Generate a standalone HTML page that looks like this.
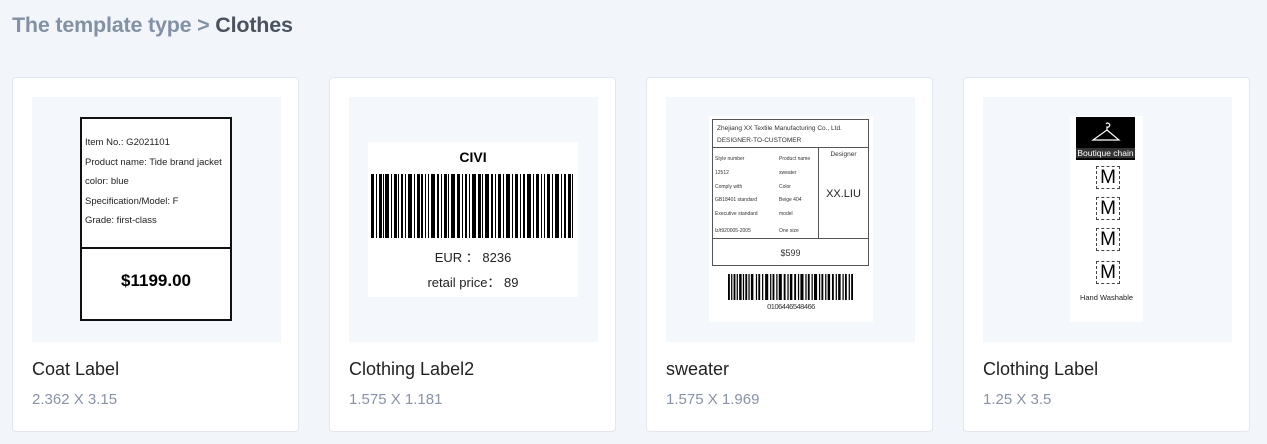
<!DOCTYPE html>
<html><head><meta charset="utf-8"><style>
*{margin:0;padding:0;box-sizing:border-box}
body{width:1267px;height:444px;background:#f2f5f9;font-family:"Liberation Sans",sans-serif;position:relative;overflow:hidden}
.a{position:absolute}
.crumb{left:12px;top:13px;font-size:21.5px;font-weight:bold;color:#8391a5;letter-spacing:-0.2px}
.crumb b{color:#4a5260}
.card{top:77px;width:287px;height:355px;background:#fff;border:1px solid #e3e8ef;border-radius:4px}
.img{left:19px;top:19px;width:249px;height:245px;background:#f4f7fc}
.t{left:19px;top:281px;font-size:18px;color:#222}
.s{left:19px;top:313px;font-size:15px;color:#8993a6}
.sm{font-size:9.5px;color:#222;line-height:19.5px}
.tiny{font-size:5px;color:#333}
</style></head><body>
<div class="a crumb">The template type &gt; <b>Clothes</b></div>

<div class="a card" style="left:12px">
 <div class="a img">
  <div class="a" style="left:48px;top:20px;width:152px;height:204px;background:#fff;border:2px solid #111">
   <div class="a sm" style="left:3px;top:14px;white-space:nowrap">Item No.: G2021101<br>Product name: Tide brand jacket<br>color: blue<br>Specification/Model: F<br>Grade: first-class</div>
   <div class="a" style="left:0;top:128px;width:148px;height:2px;background:#111"></div>
   <div class="a" style="left:0;top:152px;width:148px;text-align:center;font-size:17px;font-weight:bold">$1199.00</div>
  </div>
 </div>
 <div class="a t">Coat Label</div><div class="a s">2.362 X 3.15</div>
</div>

<div class="a card" style="left:329px">
 <div class="a img">
  <div class="a" style="left:19px;top:45px;width:210px;height:155px;background:#fff">
   <div class="a" style="left:0;top:7px;width:210px;text-align:center;font-size:14px;font-weight:bold">CIVI</div>
   <svg class="a" style="left:3px;top:32px" width="202" height="64" viewBox="0 0 202 64" preserveAspectRatio="none"><g fill="#000">
   <rect x="0" width="3" height="64"/><rect x="5" width="1" height="64"/><rect x="8" width="3" height="64"/><rect x="12" width="1" height="64"/><rect x="14" width="4" height="64"/><rect x="20" width="1" height="64"/><rect x="23" width="3" height="64"/><rect x="27" width="1" height="64"/><rect x="30" width="2" height="64"/><rect x="34" width="1" height="64"/><rect x="37" width="4" height="64"/><rect x="43" width="1" height="64"/><rect x="46" width="3" height="64"/><rect x="50" width="2" height="64"/><rect x="54" width="1" height="64"/><rect x="57" width="1" height="64"/><rect x="60" width="4" height="64"/><rect x="66" width="2" height="64"/><rect x="70" width="1" height="64"/><rect x="73" width="3" height="64"/><rect x="77" width="1" height="64"/><rect x="80" width="4" height="64"/><rect x="86" width="3" height="64"/><rect x="91" width="1" height="64"/><rect x="94" width="2" height="64"/><rect x="98" width="1" height="64"/><rect x="101" width="4" height="64"/><rect x="107" width="3" height="64"/><rect x="111" width="1" height="64"/><rect x="114" width="4" height="64"/><rect x="120" width="2" height="64"/><rect x="124" width="1" height="64"/><rect x="127" width="3" height="64"/><rect x="132" width="1" height="64"/><rect x="135" width="4" height="64"/><rect x="141" width="1" height="64"/><rect x="144" width="3" height="64"/><rect x="149" width="1" height="64"/><rect x="152" width="2" height="64"/><rect x="156" width="4" height="64"/><rect x="162" width="1" height="64"/><rect x="165" width="3" height="64"/><rect x="170" width="1" height="64"/><rect x="173" width="1" height="64"/><rect x="176" width="3" height="64"/><rect x="181" width="1" height="64"/><rect x="184" width="4" height="64"/><rect x="190" width="1" height="64"/><rect x="193" width="2" height="64"/><rect x="197" width="3" height="64"/><rect x="201" width="1" height="64"/></g></svg>
   <div class="a" style="left:0;top:105px;width:210px;text-align:center;font-size:13px;color:#222">EUR ： 8236</div>
   <div class="a" style="left:0;top:130px;width:210px;text-align:center;font-size:13px;color:#222">retail price： 89</div>
  </div>
 </div>
 <div class="a t">Clothing Label2</div><div class="a s">1.575 X 1.181</div>
</div>

<div class="a card" style="left:646px">
 <div class="a img">
  <div class="a" style="left:43px;top:19px;width:164px;height:206px;background:#fff">
   <div class="a" style="left:3px;top:3px;width:157px;height:147px;border:1px solid #555">
    <div class="a" style="left:4px;top:3px;font-size:6.5px;line-height:12px;color:#333;white-space:nowrap">Zhejiang XX Textile Manufacturing Co., Ltd.<br>DESIGNER-TO-CUSTOMER</div>
    <div class="a" style="left:0;top:27px;width:155px;height:1px;background:#555"></div>
    <div class="a" style="left:105px;top:27px;width:1px;height:91px;background:#555"></div>
    <div class="a" style="left:0;top:118px;width:155px;height:1px;background:#555"></div>
    <div class="a tiny" style="left:2px;top:33px;line-height:13.8px;white-space:nowrap">Style number<br>12512<br>Comply with<br>GB18401 standard<br>Executive standard<br><span style="line-height:18px">lz/t920005-2005</span></div>
    <div class="a tiny" style="left:66px;top:33px;line-height:13.8px;white-space:nowrap">Product name<br>sweater<br>Color<br>Beige 404<br>model<br><span style="line-height:18px">One size</span></div>
    <div class="a" style="left:106px;top:31px;width:49px;text-align:center;font-size:6.5px;color:#333">Designer</div>
    <div class="a" style="left:106px;top:68px;width:49px;text-align:center;font-size:11px;color:#222">XX.LIU</div>
    <div class="a" style="left:0;top:128px;width:155px;text-align:center;font-size:9px;color:#333">$599</div>
   </div>
   <svg class="a" style="left:19px;top:158px" width="125" height="26" viewBox="0 0 202 64" preserveAspectRatio="none"><g fill="#000"><rect x="0" width="3" height="64"/><rect x="5" width="2" height="64"/><rect x="9" width="3" height="64"/><rect x="14" width="2" height="64"/><rect x="18" width="4" height="64"/><rect x="24" width="2" height="64"/><rect x="28" width="3" height="64"/><rect x="33" width="2" height="64"/><rect x="37" width="4" height="64"/><rect x="45" width="2" height="64"/><rect x="49" width="3" height="64"/><rect x="55" width="2" height="64"/><rect x="60" width="5" height="64"/><rect x="68" width="2" height="64"/><rect x="72" width="3" height="64"/><rect x="78" width="2" height="64"/><rect x="82" width="5" height="64"/><rect x="90" width="3" height="64"/><rect x="96" width="2" height="64"/><rect x="100" width="4" height="64"/><rect x="107" width="3" height="64"/><rect x="113" width="2" height="64"/><rect x="117" width="5" height="64"/><rect x="125" width="2" height="64"/><rect x="129" width="3" height="64"/><rect x="135" width="2" height="64"/><rect x="139" width="5" height="64"/><rect x="147" width="2" height="64"/><rect x="151" width="3" height="64"/><rect x="157" width="2" height="64"/><rect x="161" width="4" height="64"/><rect x="168" width="3" height="64"/><rect x="174" width="2" height="64"/><rect x="178" width="4" height="64"/><rect x="185" width="2" height="64"/><rect x="189" width="3" height="64"/><rect x="195" width="2" height="64"/><rect x="199" width="3" height="64"/></g></svg>
   <div class="a" style="left:0;top:186px;width:164px;text-align:center;font-size:7.5px;color:#333;letter-spacing:-0.5px">0106446548466</div>
  </div>
 </div>
 <div class="a t">sweater</div><div class="a s">1.575 X 1.969</div>
</div>

<div class="a card" style="left:963px">
 <div class="a img">
  <div class="a" style="left:87px;top:19px;width:73px;height:206px;background:#fff">
   <div class="a" style="left:6px;top:1px;width:59px;height:43px;background:#000">
    <svg class="a" style="left:14px;top:5px" width="32" height="22" viewBox="0 0 32 22"><path d="M16 2a2 2 0 1 1 1 3v3L3 18h26L17 8" fill="none" stroke="#fff" stroke-width="1.2"/></svg>
    <div class="a" style="left:0;top:31px;width:59px;text-align:center;font-size:8.5px;color:#fff;background:#333;white-space:nowrap;overflow:hidden">Boutique chain</div>
   </div>
   <div class="a" style="left:26px;top:50px;width:24px;height:23px;border:1px dashed #444;text-align:center;font-size:19px;line-height:22px">M</div>
   <div class="a" style="left:26px;top:81px;width:24px;height:23px;border:1px dashed #444;text-align:center;font-size:19px;line-height:22px">M</div>
   <div class="a" style="left:26px;top:112px;width:24px;height:23px;border:1px dashed #444;text-align:center;font-size:19px;line-height:22px">M</div>
   <div class="a" style="left:26px;top:145px;width:24px;height:23px;border:1px dashed #444;text-align:center;font-size:19px;line-height:22px">M</div>
   <div class="a" style="left:0;top:177px;width:73px;text-align:center;font-size:7.5px;color:#222;white-space:nowrap">Hand Washable</div>
  </div>
 </div>
 <div class="a t">Clothing Label</div><div class="a s">1.25 X 3.5</div>
</div>
</body></html>
